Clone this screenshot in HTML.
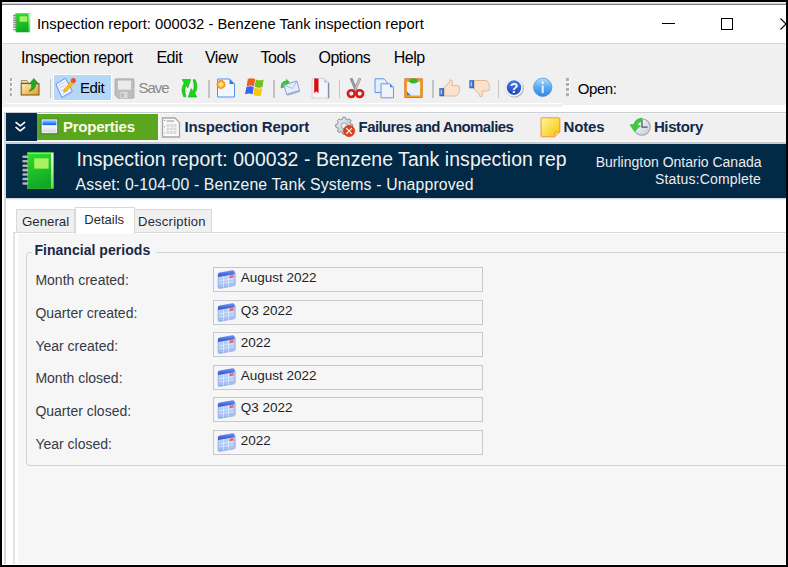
<!DOCTYPE html>
<html><head><meta charset="utf-8">
<style>
html,body{margin:0;padding:0;}
body{width:788px;height:567px;overflow:hidden;position:relative;background:#000;font-family:"Liberation Sans",sans-serif;}
.a{position:absolute;}
.t{position:absolute;white-space:pre;line-height:1;font-family:"Liberation Sans",sans-serif;}
svg{position:absolute;overflow:visible;}
</style></head><body>
<svg width="0" height="0" style="position:absolute;left:0;top:0">
<defs>
<linearGradient id="gGreen" x1="0" y1="0" x2="0.3" y2="1"><stop offset="0" stop-color="#2ee02a"/><stop offset="1" stop-color="#10a828"/></linearGradient>
<linearGradient id="gFold" x1="0" y1="0" x2="1" y2="1"><stop offset="0" stop-color="#fdf2b8"/><stop offset="1" stop-color="#e59a22"/></linearGradient>
<linearGradient id="gWin" x1="0" y1="0" x2="0" y2="1"><stop offset="0" stop-color="#9cc8ff"/><stop offset="0.35" stop-color="#0a6ef0"/><stop offset="0.45" stop-color="#fafafa"/><stop offset="1" stop-color="#d4d4e0"/></linearGradient>
<linearGradient id="gNote" x1="0" y1="0" x2="1" y2="1"><stop offset="0" stop-color="#fff6a0"/><stop offset="1" stop-color="#f5c400"/></linearGradient>
<linearGradient id="gCalTop" x1="0" y1="0" x2="0" y2="1"><stop offset="0" stop-color="#6d8ff0"/><stop offset="1" stop-color="#2a50d0"/></linearGradient>
<linearGradient id="gCalBody" x1="0" y1="0" x2="0" y2="1"><stop offset="0" stop-color="#cfe0ff"/><stop offset="1" stop-color="#9ab8f0"/></linearGradient>
<linearGradient id="gInfo" x1="0" y1="0" x2="0" y2="1"><stop offset="0" stop-color="#a8dcff"/><stop offset="1" stop-color="#1a7ce0"/></linearGradient>
<symbol id="book" viewBox="0 0 20 20">
<rect x="3.2" y="0.3" width="15.6" height="19.4" fill="url(#gGreen)" stroke="#2cb82c" stroke-width="0.5"/>
<rect x="17.3" y="0.5" width="1.4" height="19" fill="url(#gEdge)"/>
<rect x="3.4" y="0.4" width="15" height="0.7" fill="#9cf59c" opacity="0.7"/>
<rect x="7.3" y="3.4" width="8.6" height="5.6" fill="#a8f262"/>
<g fill="#b4b4b4"><rect x="0.2" y="1.9" width="3.6" height="1.4" rx="0.7"/><rect x="0.2" y="4.3" width="3.6" height="1.4" rx="0.7"/><rect x="0.2" y="6.7" width="3.6" height="1.4" rx="0.7"/><rect x="0.2" y="9.1" width="3.6" height="1.4" rx="0.7"/><rect x="0.2" y="11.5" width="3.6" height="1.4" rx="0.7"/><rect x="0.2" y="13.9" width="3.6" height="1.4" rx="0.7"/><rect x="0.2" y="16.3" width="3.6" height="1.4" rx="0.7"/></g>
</symbol>
<linearGradient id="gEdge" x1="0" y1="0" x2="0" y2="1"><stop offset="0" stop-color="#ffffff"/><stop offset="0.4" stop-color="#b8f5a0"/><stop offset="1" stop-color="#6ad84a"/></linearGradient>
<symbol id="cal" viewBox="0 0 19 19">
<path d="M1 4.5 Q1 3 2.5 2.8 L15.5 0.6 Q17.5 0.4 17.5 2.2 L17.5 14.5 Q17.5 15.8 16 16.1 L3 18.4 Q1 18.7 1 17 Z" fill="url(#gCalBody)" stroke="#7c9be0" stroke-width="0.5"/>
<path d="M1 4.5 Q1 3 2.5 2.8 L15.5 0.6 Q17.5 0.4 17.5 2.2 L17.5 4.2 L1 7 Z" fill="url(#gCalTop)"/>
<path d="M12.5 5.8 L16.5 5.1 L16.5 7.6 L12.5 8.3 Z" fill="#f06060"/>
<g stroke="#eef4ff" stroke-width="0.6"><path d="M2 11 L16.8 8.6 M2 14 L16.8 11.6 M6.5 6.3 L6.5 17.5 M11.5 5.5 L11.5 16.8"/></g>
<path d="M17.5 2.2 L18.5 3 L18.5 15 L17 16.5" stroke="#8a97b8" stroke-width="0.8" fill="none" opacity="0.6"/>
</symbol>
</defs></svg>
<!-- window frame -->
<div class="a" style="left:2px;top:2px;width:784px;height:563px;background:#fff;"></div>
<div class="a" style="left:2px;top:2px;width:784px;height:1px;background:#ececec;"></div>
<div class="a" style="left:2px;top:3px;width:784px;height:1px;background:#d4d4d4;"></div>
<div class="a" style="left:2px;top:4px;width:784px;height:1px;background:#7a7a7a;"></div>
<div class="a" style="left:2px;top:43px;width:784px;height:1px;background:#d9d9d9;"></div>
<div class="a" style="left:2px;top:44px;width:784px;height:63px;background:#f0f0f0;"></div>
<div class="a" style="left:6px;top:103px;width:556px;height:1px;background:#fff;"></div>
<div class="a" style="left:562px;top:105px;width:224px;height:2px;background:#fff;"></div>

<!-- title bar -->
<div id="ttl" class="t" style="left:37px;top:17.1px;font-size:14.75px;color:#000;">Inspection report: 000032 - Benzene Tank inspection report</div>
<div class="a" style="left:662px;top:23px;width:13px;height:1px;background:#000;"></div>
<div class="a" style="left:721px;top:18px;width:10px;height:10px;border:1px solid #000;"></div>
<svg style="left:780px;top:18px" width="12" height="12"><path d="M0.5 0.5 L6 6 L0.5 11.5" stroke="#000" stroke-width="1.1" fill="none"/></svg>

<!-- menu -->
<div class="t" style="left:21.0px;top:50px;font-size:16px;letter-spacing:-0.45px;color:#000;">Inspection report</div>
<div class="t" style="left:156.4px;top:50px;font-size:16px;letter-spacing:-0.45px;color:#000;">Edit</div>
<div class="t" style="left:204.9px;top:50px;font-size:16px;letter-spacing:-0.45px;color:#000;">View</div>
<div class="t" style="left:260.4px;top:50px;font-size:16px;letter-spacing:-0.45px;color:#000;">Tools</div>
<div class="t" style="left:318.4px;top:50px;font-size:16px;letter-spacing:-0.45px;color:#000;">Options</div>
<div class="t" style="left:393.7px;top:50px;font-size:16px;letter-spacing:-0.45px;color:#000;">Help</div>

<!-- toolbar -->
<div class="a" style="left:53px;top:74px;width:57px;height:25px;background:#b6d8f8;border:1px solid #fff;"></div>
<div class="t" style="left:80px;top:80.2px;font-size:15px;letter-spacing:-0.4px;color:#000;">Edit</div>
<div class="t" style="left:138.6px;top:79.9px;font-size:15px;color:#888;letter-spacing:-1.1px;">Save</div>
<div class="t" style="left:577.7px;top:81.2px;font-size:15px;color:#000;letter-spacing:-0.4px;">Open:</div>

<!-- tab strip -->
<div class="a" style="left:5px;top:107px;width:781px;height:458px;background:#fff;"></div>
<div class="a" style="left:5px;top:112px;width:781px;height:1px;background:#c9cdd2;"></div>
<div class="a" style="left:6px;top:113px;width:780px;height:1px;background:#f7f7f7;"></div>
<div class="a" style="left:6px;top:114px;width:780px;height:26px;background:#f0f0f0;"></div>
<div class="a" style="left:6px;top:140px;width:780px;height:2px;background:#f6f6f6;"></div>
<div class="a" style="left:5px;top:142px;width:781px;height:2px;background:#c9cdd2;"></div>
<div class="a" style="left:4px;top:112px;width:2px;height:452px;background:#d5d9e0;"></div>
<div class="a" style="left:6px;top:113px;width:31px;height:28px;background:#022946;"></div>
<div class="a" style="left:37px;top:114px;width:121px;height:26px;background:#5aa61f;"></div>
<div class="a" style="left:158px;top:113px;width:2px;height:27px;background:#f9f9f9;"></div>
<div class="t" style="left:62.9px;top:119px;font-size:15px;letter-spacing:-0.23px;font-weight:bold;color:#fdfbe6;">Properties</div>
<div class="t" style="left:184.6px;top:119px;font-size:15px;letter-spacing:-0.18px;font-weight:bold;color:#13284a;">Inspection Report</div>
<div class="t" style="left:358.6px;top:119px;font-size:15px;font-weight:bold;color:#13284a;letter-spacing:-0.6px;">Failures and Anomalies</div>
<div class="t" style="left:563.6px;top:119px;font-size:15px;letter-spacing:-0.2px;font-weight:bold;color:#13284a;">Notes</div>
<div class="t" style="left:653.9px;top:119px;font-size:15px;letter-spacing:-0.37px;font-weight:bold;color:#13284a;">History</div>

<!-- header -->
<div class="a" style="left:6px;top:144px;width:780px;height:54px;background:#022946;"></div>
<div class="a" style="left:6px;top:198px;width:780px;height:1px;background:#d2d6dc;"></div>
<div class="a" style="left:6px;top:199px;width:780px;height:1px;background:#f1f2f4;"></div>
<div class="t" style="left:76.5px;top:149.7px;font-size:19.4px;letter-spacing:0.08px;color:#f2f2f2;">Inspection report: 000032 - Benzene Tank inspection rep</div>
<div class="t" style="left:75.6px;top:177px;font-size:15.8px;color:#f2f2f2;letter-spacing:0.15px;">Asset: 0-104-00 - Benzene Tank Systems - Unapproved</div>
<div class="t" style="right:26.5px;top:155.3px;font-size:14px;color:#ececec;">Burlington Ontario Canada</div>
<div class="t" style="right:27px;top:171.6px;font-size:14px;letter-spacing:0.17px;color:#ececec;">Status:Complete</div>


<!-- title icon -->
<svg style="left:13px;top:13px" width="18" height="19.5" viewBox="0 0 20 20" preserveAspectRatio="none"><use href="#book"/><g fill="#8c8c8c"><rect x="0.2" y="1.9" width="3.6" height="1.4" rx="0.7"/><rect x="0.2" y="4.3" width="3.6" height="1.4" rx="0.7"/><rect x="0.2" y="6.7" width="3.6" height="1.4" rx="0.7"/><rect x="0.2" y="9.1" width="3.6" height="1.4" rx="0.7"/><rect x="0.2" y="11.5" width="3.6" height="1.4" rx="0.7"/><rect x="0.2" y="13.9" width="3.6" height="1.4" rx="0.7"/><rect x="0.2" y="16.3" width="3.6" height="1.4" rx="0.7"/></g></svg>
<!-- grips -->
<div class="a" style="left:9.5px;top:78px;width:2.5px;height:2.5px;background:#adadad;box-shadow:1px 1px 0 #fff,0 5px 0 #adadad,1px 6px 0 #fff,0 10px 0 #adadad,1px 11px 0 #fff,0 15.2px 0 #adadad,1px 16.2px 0 #fff;"></div>
<div class="a" style="left:566px;top:78px;width:2.5px;height:2.5px;background:#adadad;box-shadow:1px 1px 0 #fff,0 5px 0 #adadad,1px 6px 0 #fff,0 10px 0 #adadad,1px 11px 0 #fff,0 15.2px 0 #adadad,1px 16.2px 0 #fff;"></div>
<!-- separators -->
<div class="a" style="left:49.5px;top:79px;width:1.5px;height:19px;background:#c4c4c4;"></div>
<div class="a" style="left:208px;top:79.5px;width:1.5px;height:18px;background:#c4c4c4;"></div>
<div class="a" style="left:273px;top:79.5px;width:1.5px;height:18px;background:#c4c4c4;"></div>
<div class="a" style="left:338.5px;top:79.5px;width:1.5px;height:18px;background:#c4c4c4;"></div>
<div class="a" style="left:432px;top:79.5px;width:1.5px;height:18px;background:#c4c4c4;"></div>
<div class="a" style="left:497.5px;top:79.5px;width:1.5px;height:18px;background:#c4c4c4;"></div>
<!-- folder -->
<svg style="left:20px;top:77px" width="20" height="20" viewBox="0 0 20 20">
<path d="M1.3 3.5 L7 3.5 L8 5 L8 6 L1.3 6 Z" fill="#f3e6a8" stroke="#8c7a4a" stroke-width="0.8"/>
<rect x="1.2" y="6.6" width="17.8" height="11.4" fill="url(#gFold)" stroke="#6a5628" stroke-width="1"/>
<path d="M13.9 1.4 L18.6 6.8 L16 6.8 Q16 12.5 9 14.5 Q12.5 11 11.6 6.8 L9.2 6.8 Z" fill="#26a626" stroke="#17801a" stroke-width="0.5"/>
</svg>
<!-- edit icon -->
<svg style="left:55px;top:77px" width="21" height="21" viewBox="0 0 21 21">
<path d="M0.9 7 L10.5 1.3 L17.3 14.2 L6.8 20.3 Z" fill="#f2f5ff" stroke="#6d8ee4" stroke-width="1"/>
<path d="M1.8 8.8 L6.8 20.3 L17.3 14.2 L16.8 16.3 L7.2 21 Z" fill="#9db3ee"/>
<g stroke="#aac0f2" stroke-width="0.8"><path d="M3.5 8.5 L10.5 4.5 M4.8 11.2 L10.2 8 M6.1 13.9 L13 10 M7.4 16.6 L14.3 12.7"/></g>
<path d="M9.2 12.5 L17 3.3 L19.6 5.5 L11.2 14 L8.6 14.9 Z" fill="#f7c600" stroke="#d88a00" stroke-width="0.6"/>
<circle cx="18.4" cy="3.4" r="2.5" fill="#ec5030"/>
</svg>
<!-- floppy -->
<svg style="left:114px;top:77.5px" width="21" height="21" viewBox="0 0 21 21">
<path d="M1 1.5 Q1 0.8 1.8 0.8 L19.3 0.8 Q20 0.8 20 1.5 L20 19.5 Q20 20.2 19.3 20.2 L4 20.2 L1 17.2 Z" fill="#bdbdbd" stroke="#a8a8a8" stroke-width="0.8"/>
<rect x="4" y="2.6" width="13" height="9" fill="#ebebeb"/>
<rect x="6.5" y="14" width="7" height="6" fill="#d9d9d9"/>
<rect x="7.8" y="15.5" width="1.8" height="3.5" fill="#a9a9a9"/>
</svg>
<!-- refresh -->
<svg style="left:180px;top:79px" width="19" height="19" viewBox="0 0 19 19">
<path d="M2.2 0.5 L10.7 0.5 L7.7 8.9 L6.3 6.3 Q3.8 9 5.8 17.8 L3.8 17.8 Q0 10 4.2 4.2 Z" fill="#12dc12" stroke="#2a9a2a" stroke-width="0.6" stroke-linejoin="round"/>
<path d="M16.8 18 L8.3 18 L11.3 9.6 L12.7 12.2 Q15.2 9.5 13.2 0.7 L15.2 0.7 Q19 8.5 14.8 14.3 Z" fill="#12dc12" stroke="#2a9a2a" stroke-width="0.6" stroke-linejoin="round"/>
</svg>
<!-- new doc -->
<svg style="left:216px;top:78px" width="20" height="20" viewBox="0 0 20 20">
<path d="M1.5 1 L13.5 1 L18.5 6 L18.5 19 L1.5 19 Z" fill="#f2f7ff" stroke="#5590e8" stroke-width="1"/>
<path d="M13.5 1 L13.5 6 L18.5 6 Z" fill="#3a7ae0"/>
<defs><radialGradient id="gSun"><stop offset="0" stop-color="#fff8c0"/><stop offset="0.45" stop-color="#ffd050"/><stop offset="1" stop-color="#f07a10"/></radialGradient></defs>
<circle cx="5" cy="6.5" r="4.4" fill="url(#gSun)"/>
</svg>
<!-- windows logo -->
<svg style="left:243px;top:77px" width="22" height="21" viewBox="0 0 22 21">
<path d="M4.8 2 Q8 0.3 12.2 2 L11 9.2 Q7.5 7.8 3.6 9.3 Z" fill="#f0601a"/>
<path d="M12.9 2.4 Q16.5 4 20.6 2.8 L19.4 10.3 Q15.5 11.5 11.7 9.8 Z" fill="#72c01c"/>
<path d="M3.4 10 Q7.2 8.5 10.8 10 L9.6 17.2 Q5.8 15.8 2 17.2 Z" fill="#3a64f0"/>
<path d="M11.6 10.6 Q15.3 12.2 19.3 11 L18.1 18.4 Q14.2 19.6 10.4 18 Z" fill="#f6c810"/>
</svg>
<!-- email -->
<svg style="left:280px;top:79px" width="21" height="18" viewBox="0 0 21 18">
<path d="M4 6 L17 2 L19.5 11.5 L6.5 15.5 Z" fill="#e6ecfa" stroke="#7f95d0" stroke-width="0.9"/>
<path d="M4 6 L12.5 9.5 L17 2" fill="none" stroke="#9aaee0" stroke-width="0.8"/>
<path d="M6.5 15.5 L19.5 11.5 L20 13 L7.5 16.8 Z" fill="#8d9bc0" opacity="0.7"/>
<path d="M2.2 9 Q1.5 3.5 6.5 3" stroke="#3cbf3c" stroke-width="3" fill="none"/>
<path d="M6 -0.3 L9.8 3 L6 6.3 Z" fill="#3cbf3c"/>
</svg>
<!-- bookmark doc -->
<svg style="left:311px;top:77.5px" width="19" height="21" viewBox="0 0 19 21">
<path d="M1 0.5 L13 0.5 L17 4.5 L17 20 L1 20 Z" fill="#f4f4fb" stroke="#c9c9d6" stroke-width="0.8"/>
<rect x="17" y="4.5" width="1.3" height="15.8" fill="#6a6a78" opacity="0.7"/>
<path d="M13 0.5 L13 4.5 L17 4.5 Z" fill="#a9c9ee"/>
<path d="M3.2 0.5 L7.5 0.5 L7.5 15.3 L5.35 13.3 L3.2 15.3 Z" fill="#d80c0c"/>
</svg>
<!-- scissors -->
<svg style="left:346px;top:78px" width="19" height="20" viewBox="0 0 19 20">
<path d="M4.2 0.8 L6.2 0.4 L11 11.5 L9 12.3 Z" fill="#a0a0a0" stroke="#6a6a6a" stroke-width="0.6"/>
<path d="M14.8 0.8 L12.8 0.4 L8 11.5 L10 12.3 Z" fill="#c8c8c8" stroke="#7a7a7a" stroke-width="0.6"/>
<circle cx="5.3" cy="15.6" r="3.4" fill="none" stroke="#d41a1a" stroke-width="2.6"/>
<circle cx="13.7" cy="15.6" r="3.4" fill="none" stroke="#d41a1a" stroke-width="2.6"/>
</svg>
<!-- copy -->
<svg style="left:374px;top:77.5px" width="21" height="21" viewBox="0 0 21 21">
<path d="M1 0.8 L10 0.8 L13 3.8 L13 14.5 L1 14.5 Z" fill="#e4eeff" stroke="#4f8ae6" stroke-width="0.9"/>
<path d="M7 5.8 L16 5.8 L19.5 9.3 L19.5 19.8 L7 19.8 Z" fill="#eef3fc" stroke="#5f8fd8" stroke-width="0.9"/>
<path d="M16 5.8 L16 9.3 L19.5 9.3 Z" fill="#4a88e0"/>
</svg>
<!-- paste -->
<svg style="left:404px;top:78px" width="19" height="20" viewBox="0 0 19 20">
<rect x="0.8" y="0.8" width="17.4" height="18.6" fill="#f4a020" stroke="#c86a18" stroke-width="0.8"/>
<rect x="3" y="4" width="13" height="13.5" fill="#e8f0fc"/>
<path d="M3 13.5 L3 17.5 L7 17.5 Z" fill="#3a7ae0"/>
<ellipse cx="9.5" cy="2.8" rx="4.3" ry="2.6" fill="#35b82e"/>
</svg>
<!-- thumbs up -->
<svg style="left:438px;top:78.5px" width="23" height="18" viewBox="0 0 23 18">
<path d="M6 8.5 L10 5 Q12 2.5 12 0.8 Q14.5 0.5 14.5 3.5 L13.8 6.5 L19.5 6.5 Q21.8 6.8 21.5 9 Q21.8 11 21 12 Q21.5 14 20 15 Q19.5 17 17.5 17 L7.5 17 L6 16 Z" fill="#fbe2cc" stroke="#e0aa80" stroke-width="0.8"/>
<rect x="1.8" y="9.5" width="4" height="7.5" fill="#3a78d8" stroke="#1c4aa0" stroke-width="0.5"/>
<rect x="2.7" y="10.8" width="1" height="4.5" fill="#d0e4ff"/>
</svg>
<!-- thumbs down -->
<svg style="left:467.5px;top:80px" width="23" height="18" viewBox="0 0 23 18">
<path d="M6 9 L10 12.5 Q12 15 12 16.8 Q14.5 17.1 14.5 14 L13.8 11 L19.5 11 Q21.8 10.7 21.5 8.5 Q21.8 6.5 21 5.5 Q21.5 3.5 20 2.5 Q19.5 0.5 17.5 0.5 L7.5 0.5 L6 1.5 Z" fill="#fbe2cc" stroke="#e0aa80" stroke-width="0.8"/>
<rect x="1.8" y="0.5" width="4" height="7.5" fill="#3a78d8" stroke="#1c4aa0" stroke-width="0.5"/>
<rect x="2.7" y="1.8" width="1" height="4.5" fill="#d0e4ff"/>
</svg>
<!-- help -->
<svg style="left:504px;top:78px" width="21" height="20" viewBox="0 0 21 20">
<defs><linearGradient id="gHelp" x1="0" y1="0" x2="0" y2="1"><stop offset="0" stop-color="#4a7ae0"/><stop offset="1" stop-color="#1a44b8"/></linearGradient></defs>
<circle cx="10.6" cy="10.3" r="9.2" fill="#a0a0ac"/>
<circle cx="10" cy="9.6" r="9" fill="#f8f8fc" stroke="#d8dce8" stroke-width="0.5"/>
<circle cx="10" cy="9.6" r="7.3" fill="url(#gHelp)"/>
<text x="10" y="14.8" font-family="Liberation Sans" font-weight="bold" font-size="14" fill="#f4f6ff" text-anchor="middle">?</text>
</svg>
<!-- info -->
<svg style="left:533px;top:78px" width="20" height="19" viewBox="0 0 20 19">
<defs><linearGradient id="gInfo2" x1="0" y1="0" x2="0" y2="1"><stop offset="0" stop-color="#b8dcf4"/><stop offset="0.5" stop-color="#5aaaf0"/><stop offset="1" stop-color="#2a86e0"/></linearGradient></defs>
<circle cx="9.7" cy="9.3" r="9.2" fill="url(#gInfo2)" stroke="#4a90d0" stroke-width="0.7"/>
<rect x="8.7" y="7.4" width="2" height="7.8" fill="#f0f8ff" opacity="0.9"/>
<circle cx="9.7" cy="4.8" r="1.3" fill="#f0f8ff" opacity="0.9"/>
</svg>
<!-- chevron -->
<svg style="left:10px;top:116px" width="22" height="22" viewBox="0 0 22 22">
<path d="M6 6.4 L10.3 9.8 L14.6 6.4 M6 11.4 L10.3 14.8 L14.6 11.4" stroke="#fff" stroke-width="1.6" fill="none" stroke-linecap="round" stroke-linejoin="round"/>
</svg>
<!-- properties window icon -->
<svg style="left:40px;top:118px" width="19" height="17" viewBox="0 0 19 17">
<rect x="0.6" y="0.6" width="17.6" height="15.6" fill="#3c7a44"/>
<rect x="1.6" y="1.4" width="15.6" height="13.8" fill="#fff"/>
<rect x="2.4" y="2.2" width="14" height="12.2" fill="url(#gWin)"/>
</svg>
<!-- inspection report doc -->
<svg style="left:161px;top:116.5px" width="20" height="21" viewBox="0 0 20 21">
<path d="M1.5 1 L14 1 L18.5 5.5 L18.5 20 L1.5 20 Z" fill="#fafafa" stroke="#a6a6a6" stroke-width="1.3"/>
<rect x="5.5" y="3" width="7.5" height="2.2" fill="#c8c8c8"/>
<rect x="5.5" y="7" width="10" height="10" fill="#d8d8d8"/>
<g stroke="#fafafa" stroke-width="0.7"><path d="M5.5 10.3 H15.5 M5.5 13.6 H15.5 M8.8 7 V17 M12.2 7 V17"/></g>
<g fill="#8a8a8a"><circle cx="3.5" cy="3.5" r="0.6"/><circle cx="3.5" cy="9.8" r="0.6"/><circle cx="3.5" cy="16" r="0.6"/></g>
</svg>
<!-- gear -->
<svg style="left:335px;top:116px" width="22" height="22" viewBox="0 0 22 22">
<defs><linearGradient id="gGear" x1="0" y1="0" x2="1" y2="1"><stop offset="0" stop-color="#f4f6f8"/><stop offset="1" stop-color="#a9b0b8"/></linearGradient></defs>
<path d="M15.88 8.08 L17.71 8.59 L17.71 11.01 L15.88 11.52 L15.14 13.31 L16.08 14.96 L14.36 16.68 L12.71 15.74 L10.92 16.48 L10.41 18.31 L7.99 18.31 L7.48 16.48 L5.69 15.74 L4.04 16.68 L2.32 14.96 L3.26 13.31 L2.52 11.52 L0.69 11.01 L0.69 8.59 L2.52 8.08 L3.26 6.29 L2.32 4.64 L4.04 2.92 L5.69 3.86 L7.48 3.12 L7.99 1.29 L10.41 1.29 L10.92 3.12 L12.71 3.86 L14.36 2.92 L16.08 4.64 L15.14 6.29 Z" fill="url(#gGear)" stroke="#7d848c" stroke-width="0.9"/>
<circle cx="9.2" cy="9.8" r="3" fill="#e8ebee" stroke="#8d949c" stroke-width="0.7"/>
<circle cx="14.1" cy="15" r="5.6" fill="#e2401c" stroke="#b83010" stroke-width="0.6"/>
<path d="M11.3 12.2 L16.9 17.8 M16.9 12.2 L11.3 17.8" stroke="#fff" stroke-width="1.2"/>
</svg>
<!-- notes -->
<svg style="left:539.5px;top:116.5px" width="21" height="21" viewBox="0 0 21 21">
<path d="M1 1.5 Q1 0.8 1.8 0.8 L19 0.8 Q19.8 0.8 19.8 1.5 L19.8 15 L14.5 19.8 L1.8 19.8 Q1 19.8 1 19 Z" fill="url(#gNote)" stroke="#f08a3a" stroke-width="0.9"/>
<path d="M19.8 15 L14.5 15.2 L14.5 19.8" fill="#f7d060" stroke="#f08a3a" stroke-width="0.6"/>
</svg>
<!-- history -->
<svg style="left:629px;top:117px" width="22" height="20" viewBox="0 0 22 20">
<defs><linearGradient id="gClk" x1="0" y1="0" x2="1" y2="1"><stop offset="0" stop-color="#ffffff"/><stop offset="1" stop-color="#c5ccd2"/></linearGradient></defs>
<circle cx="13" cy="10" r="8.2" fill="url(#gClk)" stroke="#a4acb4" stroke-width="1.2"/>
<path d="M13 3.2 L13 10.2 L18.6 10.2" stroke="#4d5b69" stroke-width="1.3" fill="none"/>
<path d="M13 1.2 Q6.5 1.2 5 7.5 L1 7.8 L5.5 14.5 L11.5 8.8 L8.3 8.3 Q9.3 4.8 13 4.6 Z" fill="#3ccc38" stroke="#2aa52a" stroke-width="0.5"/>
</svg>
<!-- header big notebook -->
<svg style="left:21.5px;top:152px" width="33.5" height="37" viewBox="0 0 20 20" preserveAspectRatio="none"><use href="#book"/></svg>
<!-- details tabs -->
<div class="a" style="left:13px;top:232px;width:773px;height:332px;background:#dcdcdc;"></div><div class="a" style="left:13px;top:233px;width:2px;height:331px;background:#e3e3e3;"></div>
<div class="a" style="left:15px;top:233px;width:771px;height:331px;background:#fff;"></div>
<div class="a" style="left:18px;top:234px;width:768px;height:330px;background:#f6f6f6;"></div>
<div class="a" style="left:16px;top:209px;width:57px;height:22px;background:#f0f0f0;border:1px solid #d9d9d9;border-bottom:none;"></div>
<div class="a" style="left:134px;top:209px;width:76px;height:22px;background:#f0f0f0;border:1px solid #d9d9d9;border-bottom:none;"></div>
<div class="a" style="left:75px;top:207px;width:58px;height:26px;background:#fff;border:1px solid #d9d9d9;border-bottom:none;"></div>
<div class="t" style="left:21.9px;top:215.3px;font-size:13.3px;color:#272b38;">General</div>
<div class="t" style="left:84.3px;top:213px;font-size:13px;color:#272b38;">Details</div>
<div class="t" style="left:138px;top:214.7px;font-size:13px;letter-spacing:0.25px;color:#272b38;">Description</div>

<!-- groupbox -->
<svg style="left:0;top:0" width="788" height="567"><path d="M32 252.5 L30 252.5 Q26.5 252.5 26.5 256 L26.5 462 Q26.5 465.5 30 465.5 L786 465.5 M156 252.5 L786 252.5" stroke="#cfd4da" stroke-width="1" fill="none"/></svg>
<div class="t" style="left:34.4px;top:243.3px;font-size:14px;letter-spacing:0.04px;font-weight:bold;color:#1a2745;">Financial periods</div>

<!-- rows -->
<div class="t" style="left:35.4px;top:272.9px;font-size:14px;color:#363a46;">Month created:</div>
<div class="a" style="left:213px;top:267px;width:268px;height:23px;border:1px solid #c6c8cd;background:#f6f6f6;"></div>
<svg style="left:217px;top:270.0px" width="19" height="19" viewBox="0 0 19 19"><use href="#cal"/></svg>
<div class="t" style="left:240.8px;top:271.2px;font-size:13.5px;color:#1e1e28;">August 2022</div>
<div class="t" style="left:35.4px;top:305.7px;font-size:14px;color:#363a46;">Quarter created:</div>
<div class="a" style="left:213px;top:300px;width:268px;height:23px;border:1px solid #c6c8cd;background:#f6f6f6;"></div>
<svg style="left:217px;top:302.5px" width="19" height="19" viewBox="0 0 19 19"><use href="#cal"/></svg>
<div class="t" style="left:240.8px;top:303.7px;font-size:13.5px;color:#1e1e28;">Q3 2022</div>
<div class="t" style="left:35.4px;top:338.5px;font-size:14px;color:#363a46;">Year created:</div>
<div class="a" style="left:213px;top:332px;width:268px;height:23px;border:1px solid #c6c8cd;background:#f6f6f6;"></div>
<svg style="left:217px;top:335.0px" width="19" height="19" viewBox="0 0 19 19"><use href="#cal"/></svg>
<div class="t" style="left:240.8px;top:336.2px;font-size:13.5px;color:#1e1e28;">2022</div>
<div class="t" style="left:35.4px;top:371.3px;font-size:14px;color:#363a46;">Month closed:</div>
<div class="a" style="left:213px;top:365px;width:268px;height:23px;border:1px solid #c6c8cd;background:#f6f6f6;"></div>
<svg style="left:217px;top:367.5px" width="19" height="19" viewBox="0 0 19 19"><use href="#cal"/></svg>
<div class="t" style="left:240.8px;top:368.7px;font-size:13.5px;color:#1e1e28;">August 2022</div>
<div class="t" style="left:35.4px;top:404.1px;font-size:14px;color:#363a46;">Quarter closed:</div>
<div class="a" style="left:213px;top:397px;width:268px;height:23px;border:1px solid #c6c8cd;background:#f6f6f6;"></div>
<svg style="left:217px;top:400.0px" width="19" height="19" viewBox="0 0 19 19"><use href="#cal"/></svg>
<div class="t" style="left:240.8px;top:401.2px;font-size:13.5px;color:#1e1e28;">Q3 2022</div>
<div class="t" style="left:35.4px;top:436.9px;font-size:14px;color:#363a46;">Year closed:</div>
<div class="a" style="left:213px;top:430px;width:268px;height:23px;border:1px solid #c6c8cd;background:#f6f6f6;"></div>
<svg style="left:217px;top:432.5px" width="19" height="19" viewBox="0 0 19 19"><use href="#cal"/></svg>
<div class="t" style="left:240.8px;top:433.7px;font-size:13.5px;color:#1e1e28;">2022</div>
</body></html>
